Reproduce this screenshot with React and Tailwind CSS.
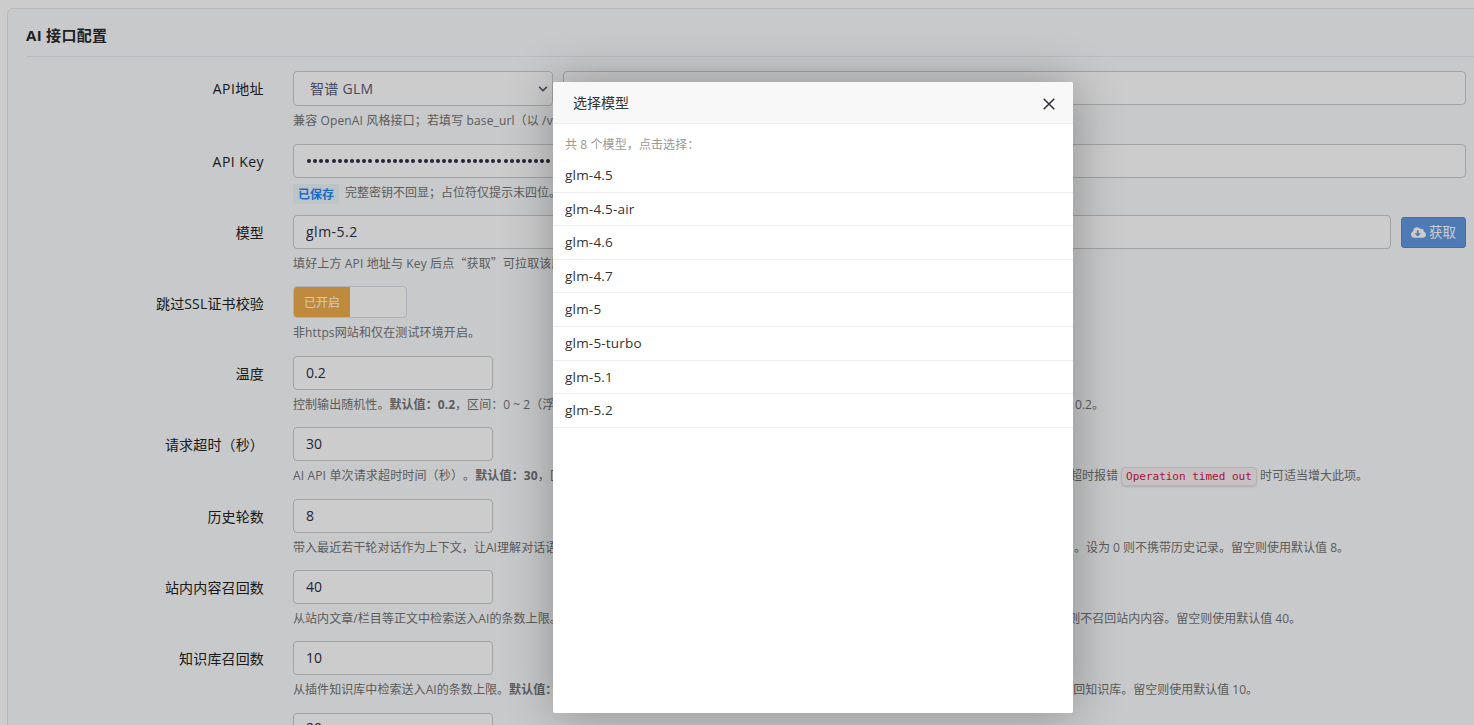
import { useState } from 'react';
import { FaCloudDownloadAlt, FaChevronDown } from 'react-icons/fa';

const models = ['glm-4.5', 'glm-4.5-air', 'glm-4.6', 'glm-4.7', 'glm-5', 'glm-5-turbo', 'glm-5.1', 'glm-5.2'];

const inputClass = 'h-[34px] rounded-[4px] border border-[#ccc] bg-white px-3 text-[14px] text-[#2c2f45] outline-none';

// One form line: label on the left, field and help text on the right
function Row({ label, height, labelClass = 'tracking-[0.15px]', children }) {
  return (
    <div className={`flex shrink-0 ${height}`}>
      <label className={`w-[238px] shrink-0 pt-[7px] text-right text-[14px] leading-[21px] text-[#222] ${labelClass}`}>{label}</label>
      <div className="ml-[29px] w-[1173px] shrink-0">{children}</div>
    </div>
  );
}

function Help({ children, tail, width = 'w-[262px]', headClass = 'tracking-[0.06px]' }) {
  return (
    <p className={`mt-[6px] flex justify-between whitespace-nowrap text-[12px] leading-[18px] text-[#737373] ${width}`}>
      <span className={`shrink-0 ${headClass}`}>{children}</span>
      {tail && <span className="shrink-0">{tail}</span>}
    </p>
  );
}

function NumberField({ defaultValue, pad = 'pb-[2px]' }) {
  return <input type="text" defaultValue={defaultValue} className={`${inputClass} ${pad} block w-[200px]`} />;
}

export default function App() {
  const [model, setModel] = useState('glm-5.2');
  const [open, setOpen] = useState(true);

  return (
    <div className="relative h-[725px] w-[1474px] overflow-hidden bg-white font-['Open_Sans','Noto_Sans_CJK_SC',sans-serif] [text-spacing-trim:space-all]">
      <div className="ml-[7px] mt-[8px] h-[760px] w-[1480px] rounded-[6px] border border-[#e3e8ec] bg-[#fafcfd] pl-[18px]">
        <h2 className="mb-[14px] h-[48px] border-b border-[#e9edf0] pt-[15px] text-[15px] font-bold leading-[22px] tracking-[0.3px] text-[#2a2a2a]">AI 接口配置</h2>

        <Row label="API地址" height="h-[73px]" labelClass="tracking-[0.4px]">
          <div className="flex gap-[10px]">
            <div className="flex h-[35px] w-[260px] items-center justify-between rounded-[4px] border border-[#ccc] bg-white pl-4 pr-[4px] text-[14px] text-[#5b5b78]">
              <span className="tracking-[0.3px]">智谱 GLM</span>
              <FaChevronDown className="h-[10px] w-[10px]" />
            </div>
            <input type="text" className={`${inputClass} flex-1`} />
          </div>
          <Help headClass="tracking-[0.13px]">兼容 OpenAI 风格接口；若填写 base_url（以 /v1</Help>
        </Row>

        <Row label="API Key" height="h-[71px]" labelClass="tracking-[0.45px]">
          <div className="flex h-[34px] items-center overflow-hidden rounded-[4px] border border-[#ccc] bg-white px-[13px]">
            <span className="flex gap-[2.15px]">
              {Array.from({ length: 60 }, (_, i) => (
                <i key={i} className="h-[4px] w-[4px] shrink-0 rounded-full bg-[#2c2f45]" />
              ))}
            </span>
          </div>
          <div className="mt-[6px] flex whitespace-nowrap text-[12px] leading-[18px] text-[#737373]">
            <span className="mr-[6px] h-[20px] rounded-[3px] bg-[#edf6fb] px-[5px] font-bold leading-[21px] text-[#1e88ff]">已保存</span>
            <span>完整密钥不回显；占位符仅提示末四位。</span>
          </div>
        </Row>

        <Row label="模型" height="h-[71px]">
          <div className="flex items-center gap-[10px]">
            <input type="text" value={model} onChange={(e) => setModel(e.target.value)} className={`${inputClass} flex-1 pb-[2px] tracking-[0.5px]`} />
            <button
              type="button"
              onClick={() => setOpen(true)}
              className="mt-[1px] flex h-[31px] w-[65px] items-center justify-center gap-[3px] rounded-[3px] border border-[#4f8bdc] bg-[#629ae4] pb-px text-[13.5px] text-white"
            >
              <FaCloudDownloadAlt className="h-[13px] w-[15px]" />
              获取
            </button>
          </div>
          <Help headClass="tracking-[0.14px]">
            填好上方 API 地址与 Key 后点<span className="font-['Noto_Sans_CJK_SC',sans-serif] leading-none">“获取”</span>可拉取该服
          </Help>
        </Row>

        <Row label="跳过SSL证书校验" height="h-[70px]">
          <div className="flex h-[32px] w-[114px] overflow-hidden rounded-[4px] border border-[#dcdfe8] bg-white">
            <span className="w-[56px] bg-[#f0ad4e] text-center text-[12px] leading-[31px] text-white">已开启</span>
          </div>
          <Help headClass="tracking-[0.12px]">非https网站和仅在测试环境开启。</Help>
        </Row>

        <Row label="温度" height="h-[71px]">
          <NumberField defaultValue="0.2" />
          <Help width="w-[811px]" tail="0.2。">
            控制输出随机性。<b>默认值：0.2</b>，区间：0<span className="inline-block w-[13px] text-center">~</span>2（浮
          </Help>
        </Row>

        <Row label="请求超时（秒）" height="h-[72px]">
          <NumberField defaultValue="30" />
          <Help
            width="w-[1075px]"
            headClass="tracking-[0.15px]"
            tail={
              <>
                超时报错{' '}
                <code className="rounded-[4px] border border-[#e6dcdf] bg-[#f9f2f4] px-[4px] py-[2px] font-['DejaVu_Sans_Mono',monospace] text-[11px] text-[#d0144c] shadow-sm">Operation timed out</code>{' '}
                时可适当增大此项。
              </>
            }
          >
            AI API 单次请求超时时间（秒）。<b>默认值：30</b>，区
          </Help>
        </Row>

        <Row label="历史轮数" height="h-[71px]">
          <NumberField defaultValue="8" />
          <Help width="w-[1056px]" tail="。设为 0 则不携带历史记录。留空则使用默认值 8。">
            带入最近若干轮对话作为上下文，让AI理解对话语
          </Help>
        </Row>

        <Row label="站内内容召回数" height="h-[71px]">
          <NumberField defaultValue="40" />
          <Help width="w-[1008px]" tail="则不召回站内内容。留空则使用默认值 40。">
            从站内文章/栏目等正文中检索送入AI的条数上限。
          </Help>
        </Row>

        <Row label="知识库召回数" height="h-[72px]">
          <NumberField defaultValue="10" />
          <Help width="w-[965px]" tail="回知识库。留空则使用默认值 10。">
            从插件知识库中检索送入AI的条数上限。<b>默认值：</b>
          </Help>
        </Row>

        <Row label="" height="h-[71px]">
          <NumberField defaultValue="20" pad="pb-[5px]" />
        </Row>
      </div>

      {open && (
        <div className="absolute inset-0 bg-black/20">
          <div className="absolute left-[553px] top-[82px] h-[631px] w-[520px] rounded-[2px] bg-white shadow-[1px_1px_50px_rgba(0,0,0,0.3)]">
            <div className="flex h-[42px] items-center justify-between rounded-t-[2px] border-b border-[#eee] bg-[#f8f8f8] pl-[20px] pr-[18px]">
              <span className="text-[14px] text-[#333]">选择模型</span>
              <button type="button" onClick={() => setOpen(false)} className="mt-[3px]">
                <svg className="block h-[12px] w-[12px]" viewBox="0 0 12 12" stroke="#2e2d3c" strokeWidth="1.5" fill="none">
                  <path d="M0.7 0.7 11.3 11.3M11.3 0.7 0.7 11.3" />
                </svg>
              </button>
            </div>
            <p className="px-3 pt-[12px] text-[12px] leading-[18px] tracking-[0.1px] text-[#999]">共 8 个模型，点击选择：</p>
            <ul className="pt-[5px]">
              {models.map((name) => (
                <li
                  key={name}
                  onClick={() => {
                    setModel(name);
                    setOpen(false);
                  }}
                  className="h-[33.6px] cursor-pointer border-b border-[#eee] px-3 text-[13.5px] leading-[32px] tracking-[0.2px] text-[#333]"
                >
                  {name}
                </li>
              ))}
            </ul>
          </div>
        </div>
      )}
    </div>
  );
}
